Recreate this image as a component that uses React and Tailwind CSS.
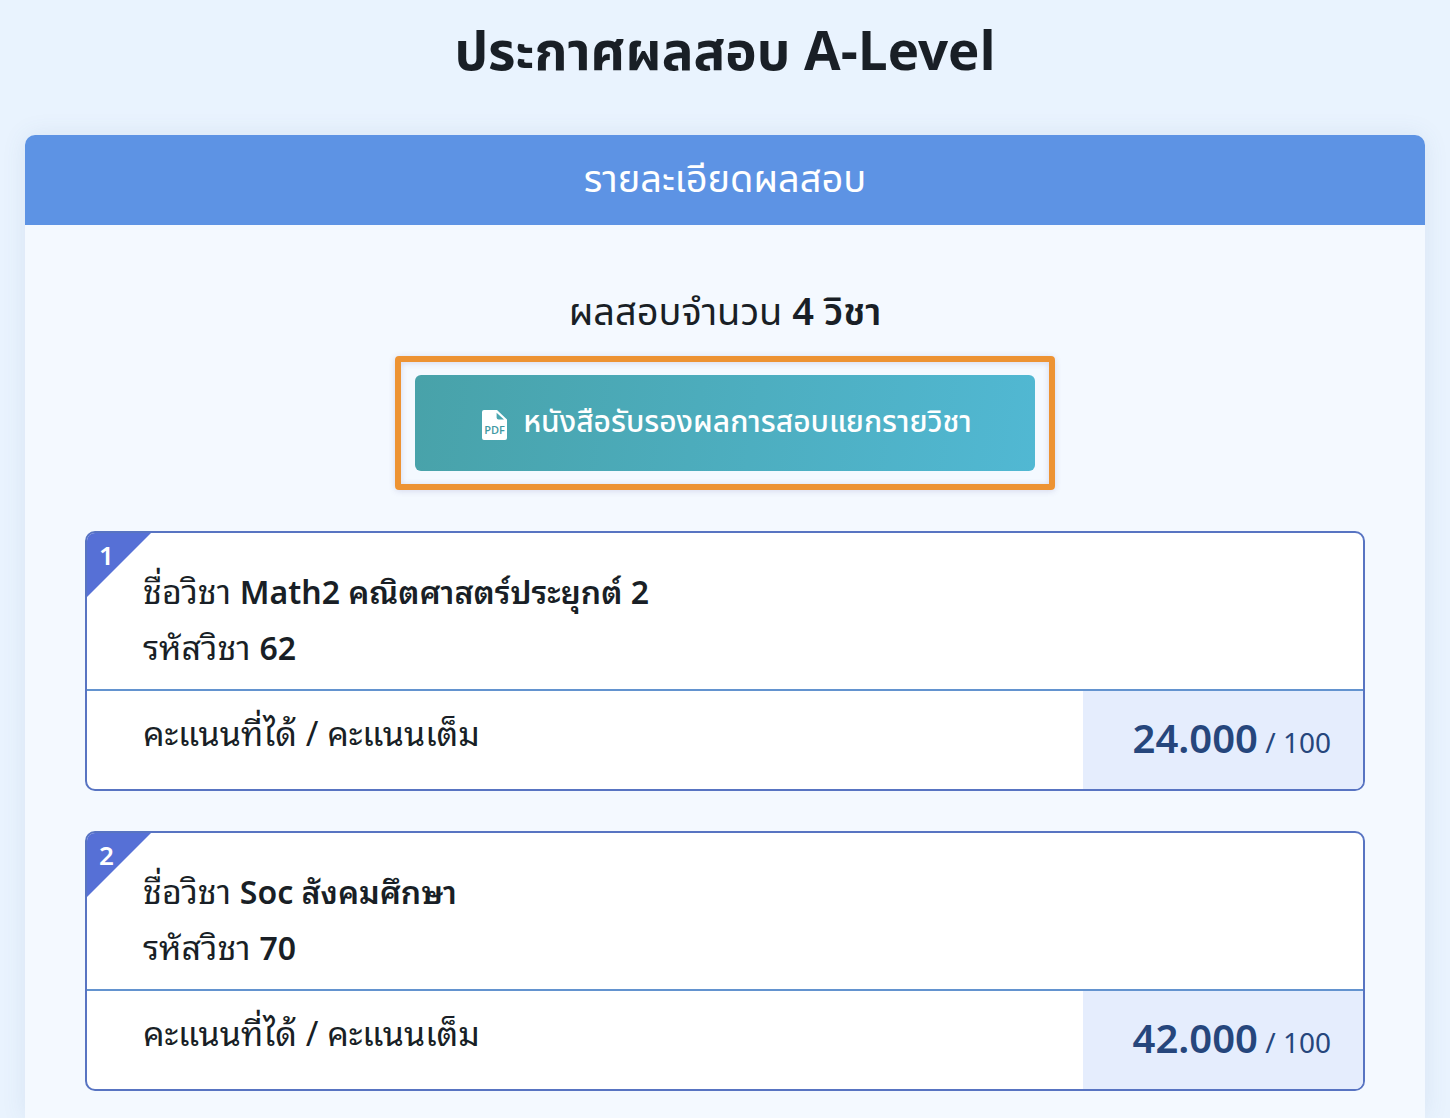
const subjects = [
    { no: 1, name: 'Math2 คณิตศาสตร์ประยุกต์ 2', code: '62', score: '24.000', full: '100' },
    { no: 2, name: 'Soc สังคมศึกษา', code: '70', score: '42.000', full: '100' },
];

const PdfIcon = () => (
    <svg viewBox="0 0 25 30" className="w-[25px] h-[30px] mt-1 shrink-0" aria-hidden="true">
        <path
            fill="currentColor"
            fillRule="evenodd"
            d="M2 0h13L25 9.5V28a2 2 0 0 1-2 2H2a2 2 0 0 1-2-2V2a2 2 0 0 1 2-2zM14.6 2.8v4.8a2 2 0 0 0 2 2h5.4z"
        />
        <text
            x="12.5"
            y="23.5"
            textAnchor="middle"
            className="fill-[#3f99a3] font-['Open_Sans',sans-serif] text-[11px] font-semibold"
        >
            PDF
        </text>
    </svg>
);

const SubjectCard = ({ subject }) => (
    <li className="relative bg-white border-2 border-[#5874c2] rounded-[10px] overflow-hidden">
        {/* Corner ribbon with the running number */}
        <div className="absolute top-0 left-0 size-16 bg-[#5670d6] [clip-path:polygon(0_0,100%_0,0_100%)]">
            <span className="block pl-3 pt-2 text-[26px] leading-7 font-semibold text-white">{subject.no}</span>
        </div>

        <div className="px-14 pt-[30px] pb-[14px] text-[34px] leading-14 border-b-2 border-[#6393cf]">
            <p>
                ชื่อวิชา <b className="text-[32px] leading-none font-semibold">{subject.name}</b>
            </p>
            <p>
                รหัสวิชา <b className="text-[32px] leading-none font-semibold">{subject.code}</b>
            </p>
        </div>

        <div className="flex h-[98px]">
            <p className="flex-1 px-14 pt-[14px] text-[34px] leading-14">คะแนนที่ได้ / คะแนนเต็ม</p>
            <p className="w-[280px] pr-8 pb-1 flex items-center justify-end bg-[#e5edfd] text-[#26467c]">
                <span className="text-[28px]">
                    <b className="text-[40px] font-semibold">{subject.score}</b> / {subject.full}
                </span>
            </p>
        </div>
    </li>
);

export default function App() {
    return (
        <main className="min-h-screen flex flex-col px-[25px] pt-[22px] bg-[#e9f3fe] text-[#191f26] font-['Noto_Sans','Noto_Sans_Thai_Looped',sans-serif]">
            <h1 className="text-center text-[53px] leading-16 font-bold font-['Noto_Sans_Thai','Noto_Sans',sans-serif]">
                ประกาศผลสอบ A-Level
            </h1>

            <section className="flex-1 mt-[49px] rounded-t-[10px] bg-[#f4f9ff] shadow-[0_0_24px_rgba(70,100,150,0.1)]">
                <h2 className="h-[90px] flex items-center justify-center rounded-t-[10px] bg-[#5d93e4] text-white text-[38px] font-normal font-['Noto_Sans_Thai','Noto_Sans',sans-serif]">
                    รายละเอียดผลสอบ
                </h2>

                <div className="px-[60px] pt-[57px] pb-[27px]">
                    <p className="text-center text-[38px] leading-16 font-normal font-['Noto_Sans_Thai','Noto_Sans',sans-serif]">
                        ผลสอบจำนวน <b className="font-semibold">4 วิชา</b>
                    </p>

                    <div className="w-fit mx-auto mt-[10px] px-[14px] py-[13px] border-6 border-[#ed9333] rounded-sm shadow-[0_1px_6px_rgba(90,90,160,0.2),inset_0_1px_6px_rgba(90,90,160,0.2)]">
                        <button
                            type="button"
                            className="w-[620px] h-24 pl-1 flex items-center justify-center gap-4 rounded-md bg-linear-[100deg] from-[#48a2a9] to-[#51b8d3] text-white text-[30px] font-medium font-['Noto_Sans_Thai','Noto_Sans',sans-serif]"
                        >
                            <PdfIcon />
                            หนังสือรับรองผลการสอบแยกรายวิชา
                        </button>
                    </div>

                    <ul className="mt-[41px] flex flex-col gap-10">
                        {subjects.map((subject) => (
                            <SubjectCard key={subject.no} subject={subject} />
                        ))}
                    </ul>
                </div>
            </section>
        </main>
    );
}
